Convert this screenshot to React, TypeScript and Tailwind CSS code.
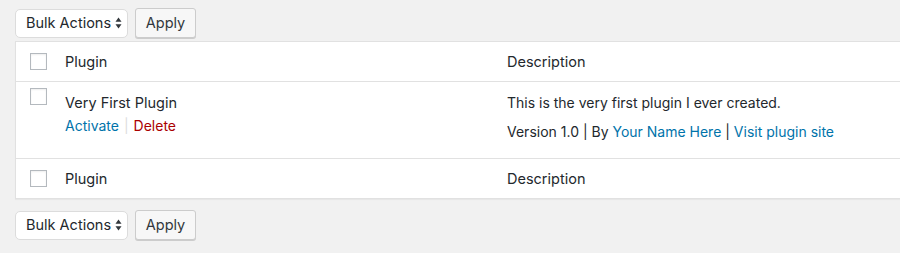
import React from "react";

function Arrows() {
  return (
    <svg width="7" height="12" viewBox="0 0 7 12" className="shrink-0">
      <path d="M3.5 0.5 L6.5 4.8 L0.5 4.8 Z" fill="#32373c" />
      <path d="M3.5 11.5 L6.5 7.2 L0.5 7.2 Z" fill="#32373c" />
    </svg>
  );
}

function BulkBar() {
  return (
    <div className="flex items-center gap-[7px] pl-[15px] text-[14.5px]">
      <div className="flex h-[29px] w-[113px] items-center justify-between rounded-[5px] border border-[#dcdcdc] bg-white pl-[10px] pr-[5px] text-[#23282d]">
        <span>Bulk Actions</span>
        <Arrows />
      </div>
      <button className="h-[30px] w-[61px] rounded-[3px] border border-[#cccccc] bg-[#f7f7f7] text-[#32373c] shadow-[0_1px_0_#cccccc]">
        Apply
      </button>
    </div>
  );
}

function Checkbox() {
  return <div className="h-[17px] w-[17px] border border-[#b4b9be] bg-white shadow-[inset_0_1px_2px_rgba(0,0,0,0.07)]" />;
}

function HeadRow() {
  return (
    <div className="flex h-[39px] items-center text-[14.5px]">
      <div className="w-[49px] pl-[14px]">
        <Checkbox />
      </div>
      <div className="w-[442px]">Plugin</div>
      <div>Description</div>
    </div>
  );
}

export default function App() {
  return (
    <div className="h-[253px] w-full overflow-hidden bg-[#f1f1f1] pt-[8px] text-[14px] text-[#23282d] [font-family:Inter,'Liberation_Sans',sans-serif]">
      <BulkBar />
      <div className="ml-[15px] mt-[3px] border-y border-l border-[#e1e1e1] bg-white shadow-[0_1px_1px_rgba(0,0,0,0.04)]">
        <div className="border-b border-[#e1e1e1]">
          <HeadRow />
        </div>
        <div className="flex h-[77px] border-b border-[#e1e1e1]">
          <div className="w-[49px] pl-[14px] pt-[6px]">
            <Checkbox />
          </div>
          <div className="w-[442px] pt-[11px] leading-[20px]">
            <div className="text-[14.5px]">Very First Plugin</div>
            <div className="mt-[3px] flex items-center text-[#0073aa]">
              <span>Activate</span>
              <span className="mx-[5px] text-[#dddddd]">|</span>
              <span className="text-[#a00]">Delete</span>
            </div>
          </div>
          <div className="pt-[11px] leading-[20px]">
            <div>This is the very first plugin I ever created.</div>
            <div className="mt-[9px]">
              Version 1.0 | By <span className="text-[#0073aa]">Your Name Here</span> |{" "}
              <span className="text-[#0073aa]">Visit plugin site</span>
            </div>
          </div>
        </div>
        <HeadRow />
      </div>
      <div className="mt-[11px]">
        <BulkBar />
      </div>
    </div>
  );
}
